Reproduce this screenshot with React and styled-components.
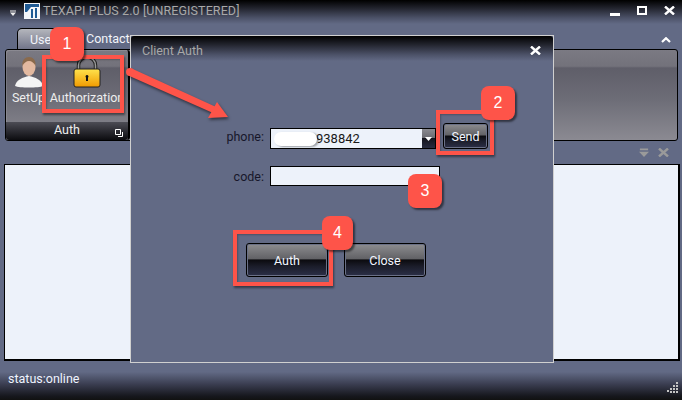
import React from 'react';
import styled, { createGlobalStyle } from 'styled-components';

const Global = createGlobalStyle`
  html, body { margin: 0; padding: 0; background: #626a85; overflow: hidden; }
  * { box-sizing: border-box; }
`;
const Window = styled.div`
  position: relative; width: 682px; height: 400px; overflow: hidden;
  background: #626a85; font-family: Roboto, "Open Sans", sans-serif; font-size: 12px;
  display: flex; flex-direction: column;
`;
const darkBar = 'linear-gradient(#000 0%, #23252f 35%, #4c5268 75%, #626a85 100%)';
const ribbonFill = 'linear-gradient(#7b7a83 0%, #73727b 18%, #5f5e69 20%, #6d6d77 55%, #8b8a92 100%)';
const TitleBar = styled.div`
  height: 24px; flex: none; background: ${darkBar}; display: flex; align-items: center;
  padding-left: 10px; color: #a8a8a8; font-size: 12.5px;
`;
const AppMenu = styled.svg`width: 7px; height: 7px; margin-right: 7px; margin-top: 2px;`;
const Logo = styled.svg`width: 16px; height: 16px; margin-right: 3px; margin-top: -2px;`;
const TitleText = styled.span`margin-top: -4px; letter-spacing: 0.1px;`;
const WinButtons = styled.div`
  margin-left: auto; display: flex; align-items: center; gap: 17px; padding-right: 7px; margin-top: -3px;
`;
const TabRow = styled.div`
  height: 25px; flex: none; display: flex; align-items: flex-end; padding-left: 17px; position: relative;
`;
const Tab = styled.div`
  height: 21px; padding: 3px 0 0 12px; color: #f2f4fa; font-size: 12.5px;
  width: ${p => p.$w}px;
  ${p => p.$active ? 'background: linear-gradient(#b4b6bc, #72758a); border: 1px solid #000; border-bottom: 0; border-radius: 5px 3px 0 0;' : ''}
`;
const Collapse = styled.svg`position: absolute; right: 11px; top: 13px; width: 10px; height: 6px;`;
const Ribbon = styled.div`
  height: 92px; flex: none; margin: 0 4px 0 5px; border: 1px solid #000; border-radius: 3px;
  background: ${ribbonFill};
`;
const Group = styled.div`
  width: 124px; height: 90px; border-right: 2px solid #000; border-radius: 3px; background: ${ribbonFill};
  display: flex; flex-direction: column; position: relative;
  box-shadow: inset 1px 1px 0 rgba(255,255,255,.12);
`;
const GroupItems = styled.div`flex: 1; display: flex; padding: 4px 0 0 6px; color: #eee; gap: 3px;`;
const Item = styled.div`
  display: flex; flex-direction: column; align-items: center; width: ${p => p.$w}px; overflow: hidden; white-space: nowrap;
`;
const ItemIcon = styled.svg`width: 34px; height: 34px; flex: none; margin-top: 2px;`;
const ItemLabel = styled.span`font-size: 12.5px;`;
const GroupFooter = styled.div`
  height: 18px; background: linear-gradient(#4c4c55, #0c0c10); color: #eee; text-align: center; font-size: 12.5px;
  line-height: 16px; position: relative; border-radius: 0 0 3px 3px;
`;
const Launcher = styled.svg`position: absolute; right: 5px; bottom: 3px; width: 8px; height: 8px;`;
const PanelTools = styled.div`
  height: 23px; flex: none; display: flex; align-items: center; justify-content: flex-end; gap: 9px; padding-right: 13px;
`;
const Content = styled.div`
  height: 197px; flex: none; margin: 0 2px 0 4px; background: #edf2fa; border: 1px solid #000; border-right-width: 2px; border-bottom-width: 2px;
`;
const StatusBar = styled.div`
  flex: 1; background: linear-gradient(#626a85 0%, #626a85 28%, #3a3d50 60%, #16171d 90%, #111 100%);
  color: #f0f4ff; padding: 10px 0 0 8px; font-size: 12.5px; position: relative;
`;
const Grip = styled.svg`position: absolute; right: 4px; bottom: 7px; width: 11px; height: 11px;`;

const Dialog = styled.div`
  position: absolute; left: 130px; top: 35px; width: 424px; height: 328px; background: #626a85;
  border: 1px solid #d0d0d0; display: flex; flex-direction: column;
`;
const DialogHead = styled.div`
  height: 25px; flex: none; background: ${darkBar}; color: #a8a8a8; font-size: 12.5px; display: flex; align-items: center;
  padding: 3px 12px 0 11px; justify-content: space-between; border-radius: 3px 3px 0 0;
`;
const Form = styled.div`
  display: grid; grid-template-columns: 139px 166px 7px 45px; grid-auto-rows: min-content; padding-top: 62px; align-items: center;
`;
const Label = styled.label`text-align: right; color: #17172a; font-size: 12.5px; padding-right: 6px;`;
const Combo = styled.div`
  height: 21px; background: #edf2fa; border: 1px solid #000; color: #1a1a1a; display: flex; align-items: center; padding-left: 45px;
  position: relative; font-size: 13px; margin-top: 5px;
`;
const ComboArrow = styled.div`
  position: absolute; right: 0; top: 0; bottom: 0; width: 13px;
  background: linear-gradient(#8a8a90 0%, #6c6c72 45%, #14141c 50%, #272b40 100%);
  display: flex; align-items: center; justify-content: center;
`;
const Blur = styled.div`
  position: absolute; left: 3px; top: 3px; width: 43px; height: 14px; background: #fff; border-radius: 8px;
  box-shadow: 2px 1px 2px rgba(0,0,0,0.35);
`;
const Btn = styled.button`
  width: ${p => p.$w}px; height: ${p => p.$h}px; border: 1px solid #000; border-radius: 3px; font: inherit; font-size: 12.5px;
  color: #f2f6ff; padding: 0; box-shadow: inset 0 0 0 1px #6a7086;
  background: linear-gradient(#8d8d90 0%, #626266 46%, #0b0b0f 50%, #1b1d2a 70%, #2c3048 100%);
`;
const Input = styled.div`
  grid-column: 2 / span 3; width: 170px; height: 20px; background: #edf2fa; border: 1px solid #000; margin-top: 17px;
`;
const CodeLabel = styled(Label)`margin-top: 17px;`;
const Actions = styled.div`display: flex; gap: 16px; padding: 57px 0 0 115px;`;

const RedBox = styled.div`
  position: absolute; left: ${p => p.$x}px; top: ${p => p.$y}px; width: ${p => p.$w}px; height: ${p => p.$h}px;
  border: 4px solid #fe5449; box-shadow: 1px 2px 2px rgba(0,0,0,0.45), inset 1px 1px 2px rgba(0,0,0,0.25);
`;
const Badge = styled.div`
  position: absolute; left: ${p => p.$x}px; top: ${p => p.$y}px; width: ${p => p.$w || 34}px; height: 34px; background: #fe5449;
  border-radius: 8px; color: #fff; display: flex; align-items: center; justify-content: center;
  font-family: "Liberation Sans", sans-serif; font-size: 16px; box-shadow: 2px 2px 2px rgba(0,0,0,0.5);
`;
const ArrowSvg = styled.svg`
  position: absolute; left: 120px; top: 60px; width: 120px; height: 70px; overflow: visible;
  filter: drop-shadow(1px 2px 1.5px rgba(0,0,0,.5));
`;

const X = ({ c = '#fff', s = 11 }) => (
  <svg width={s} height={s - 2} viewBox="0 0 11 9"><path d="M1 .5 10 8.500M10 .5 1 8.500" stroke={c} strokeWidth="2.400" /></svg>
);

export default function App() {
  return (
    <Window>
      <Global />
      <TitleBar>
        <AppMenu viewBox="0 0 7 7"><path d="M0 0.500h6v1H0zM0 2.500h6L3 6z" fill="#eee" /></AppMenu>
        <Logo viewBox="0 0 16 16">
          <rect width="16" height="16" fill="#f4f6fa" />
          <path d="M1 1h14v3H7L3 9H1zM7 6h2v9H7zM11 5h2v10h-2z" fill="#1f5a94" />
        </Logo>
        <TitleText>TEXAPI PLUS 2.0 [UNREGISTERED]</TitleText>
        <WinButtons>
          <svg width="10" height="10" viewBox="0 0 10 10"><rect y="7" width="10" height="3" fill="#fff" /></svg>
          <svg width="10" height="10" viewBox="0 0 10 10"><rect x="1" y="1" width="8" height="7" fill="none" stroke="#fff" strokeWidth="2" /></svg>
          <X />
        </WinButtons>
      </TitleBar>
      <TabRow>
        <Tab $active $w={57}>User</Tab>
        <Tab $w={70}>Contact</Tab>
        <Collapse viewBox="0 0 10 6"><path d="M1 5 5 1.200 9 5" fill="none" stroke="#fff" strokeWidth="2.200" /></Collapse>
      </TabRow>
      <Ribbon>
        <Group>
          <GroupItems>
            <Item $w={33}>
              <ItemIcon viewBox="0 0 34 34">
                <path d="M3 30c1-6 8-9 14-10 6 1 13 4 14 10-4 2-24 2-28 0z" fill="#f4f4f4" />
                <ellipse cx="17" cy="11" rx="6.500" ry="9" fill="#e3b9a0" />
                <path d="M10.500 10c-1-6 3-9 6.500-9s7.500 3 6.500 9c-1-3-4-5-6.500-5s-5.500 2-6.500 5z" fill="#8a6a4c" />
              </ItemIcon>
              <ItemLabel>SetUp</ItemLabel>
            </Item>
            <Item $w={78}>
              <ItemIcon viewBox="0 0 34 34">
                <defs>
                  <linearGradient id="lk" x1="0" y1="0" x2="0" y2="1">
                    <stop offset="0" stopColor="#ffe34d" /><stop offset="1" stopColor="#f09a00" />
                  </linearGradient>
                </defs>
                <path d="M8.500 15V9.500a8.500 8.500 0 0 1 17 0V15" fill="none" stroke="#222" strokeWidth="3.500" />
                <path d="M8.500 15V9.500a8.500 8.500 0 0 1 17 0V15" fill="none" stroke="#9a9a9a" strokeWidth="1.500" />
                <rect x="4" y="13" width="26" height="18" rx="2" fill="url(#lk)" stroke="#222" />
                <path d="M17 19a1.500 1.500 0 0 1 1 2.600V25h-2v-3.400a1.500 1.500 0 0 1 1-2.600z" fill="#111" />
              </ItemIcon>
              <ItemLabel>Authorization</ItemLabel>
            </Item>
          </GroupItems>
          <GroupFooter>
            Auth
            <Launcher viewBox="0 0 8 8"><path d="M.5.500h5v5h-5zM7.500 3v4.500H3" fill="none" stroke="#fff" /></Launcher>
          </GroupFooter>
        </Group>
      </Ribbon>
      <PanelTools>
        <svg width="10" height="10" viewBox="0 0 11 10"><path d="M1 0h9v2H1zM0 3.500h11L5.500 9.500z" fill="#9a9a9a" /></svg>
        <X c="#9a9a9a" />
      </PanelTools>
      <Content />
      <StatusBar>
        status:online
        <Grip viewBox="0 0 11 11">
          <path d="M9 0h2v2H9zM6 3h2v2H6zM9 3h2v2H9zM3 6h2v2H3zM6 6h2v2H6zM9 6h2v2H9zM0 8h2v2H0zM3 9h2v2H3zM6 9h2v2H6zM9 9h2v2H9z" fill="#c4c4c4" />
        </Grip>
      </StatusBar>

      <Dialog>
        <DialogHead>Client Auth <X /></DialogHead>
        <Form>
          <Label>phone:</Label>
          <Combo>
            <Blur />
            938842
            <ComboArrow><svg width="7" height="4" viewBox="0 0 7 4"><path d="M0 0h7L3.500 4z" fill="#fff" /></svg></ComboArrow>
          </Combo>
          <span />
          <Btn $w={45} $h={26}>Send</Btn>
          <CodeLabel>code:</CodeLabel>
          <Input />
        </Form>
        <Actions>
          <Btn $w={82} $h={34}>Auth</Btn>
          <Btn $w={82} $h={34}>Close</Btn>
        </Actions>
      </Dialog>

      <RedBox $x={42} $y={55} $w={82} $h={58} />
      <RedBox $x={436} $y={110} $w={58} $h={45} />
      <RedBox $x={233} $y={230} $w={100} $h={56} />
      <ArrowSvg viewBox="120 60 120 70">
        <path d="M131.700 68.400 217.200 107.500 214.800 113.700 128.300 75.600z" fill="#fe5449" />
        <circle cx="130" cy="72" r="4" fill="#fe5449" />
        <path d="M228 117 217 102 208 118z" fill="#fe5449" />
      </ArrowSvg>
      <Badge $x={50} $y={27}>1</Badge>
      <Badge $x={481} $y={86}>2</Badge>
      <Badge $x={408} $y={174}>3</Badge>
      <Badge $x={322} $y={216} $w={31}>4</Badge>
    </Window>
  );
}
